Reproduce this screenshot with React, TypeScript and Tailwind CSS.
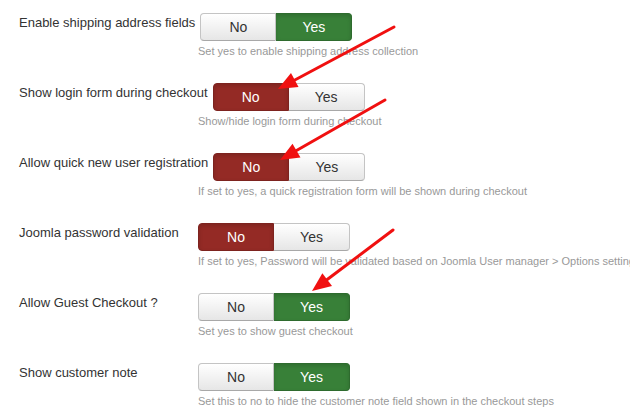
import React from 'react';

type Setting = {
  label: string;
  help: string;
  value: 'yes' | 'no';
};

const settings: Setting[] = [
  { label: 'Enable shipping address fields', help: 'Set yes to enable shipping address collection', value: 'yes' },
  { label: 'Show login form during checkout', help: 'Show/hide login form during checkout', value: 'no' },
  { label: 'Allow quick new user registration', help: 'If set to yes, a quick registration form will be shown during checkout', value: 'no' },
  { label: 'Joomla password validation', help: 'If set to yes, Password will be validated based on Joomla User manager > Options settings', value: 'no' },
  { label: 'Allow Guest Checkout ?', help: 'Set yes to show guest checkout', value: 'yes' },
  { label: 'Show customer note', help: 'Set this to no to hide the customer note field shown in the checkout steps', value: 'yes' },
];

function YesNo({ value }: { value: 'yes' | 'no' }) {
  const off = 'bg-linear-to-b from-white to-[#e6e6e6] text-[#333] border-[#c4c4c4] border-b-[#a8a8a8]';
  return (
    <div className="flex ml-[5px] shrink-0 text-[14px] leading-[26px]">
      <button
        className={`w-[76px] h-[28px] border rounded-l-[4px] ${
          value === 'no'
            ? 'bg-[#942a25] text-white border-[#7d231f] shadow-[inset_0_2px_4px_rgba(0,0,0,0.15)]'
            : off
        }`}
      >
        No
      </button>
      <button
        className={`w-[76px] h-[28px] border border-l-0 rounded-r-[4px] ${
          value === 'yes'
            ? 'bg-[#388038] text-white border-[#2e6b2e] shadow-[inset_0_2px_4px_rgba(0,0,0,0.15)]'
            : off
        }`}
      >
        Yes
      </button>
    </div>
  );
}

function Arrow({ x1, y1, x2, y2 }: { x1: number; y1: number; x2: number; y2: number }) {
  const dx = x2 - x1;
  const dy = y2 - y1;
  const len = Math.hypot(dx, dy);
  const ux = dx / len;
  const uy = dy / len;
  const hl = 19;
  const hw = 8;
  const bx = x2 - ux * hl;
  const by = y2 - uy * hl;
  const pts = `${x2},${y2} ${bx - uy * hw},${by + ux * hw} ${bx + uy * hw},${by - ux * hw}`;
  return (
    <g>
      <line x1={x1} y1={y1} x2={bx + ux * 2} y2={by + uy * 2} stroke="#f01010" strokeWidth={3} strokeLinecap="round" />
      <polygon points={pts} fill="#f01010" />
    </g>
  );
}

export default function App() {
  return (
    <div className="relative w-[630px] h-[414px] overflow-hidden bg-white font-['Liberation_Sans',Arial,sans-serif]">
      {/* Form rows */}
      <div className="pt-[13px] pl-[19px]">
        {settings.map((s) => (
          <div key={s.label} className="h-[70px]">
            <div className="flex items-start">
              <label className="min-w-[174px] whitespace-nowrap pt-[1px] text-[13px] leading-[18px] text-[#333]">
                {s.label}
              </label>
              <YesNo value={s.value} />
            </div>
            <p className="ml-[179px] mt-[3px] whitespace-nowrap text-[11px] leading-[14px] text-[#999]">{s.help}</p>
          </div>
        ))}
      </div>

      {/* Red arrows drawn over the page */}
      <svg className="absolute inset-0 pointer-events-none" width={630} height={414}>
        <Arrow x1={394} y1={27} x2={278} y2={89} />
        <Arrow x1={385} y1={100} x2={280} y2={160} />
        <Arrow x1={393} y1={230} x2={312} y2={291} />
      </svg>
    </div>
  );
}
